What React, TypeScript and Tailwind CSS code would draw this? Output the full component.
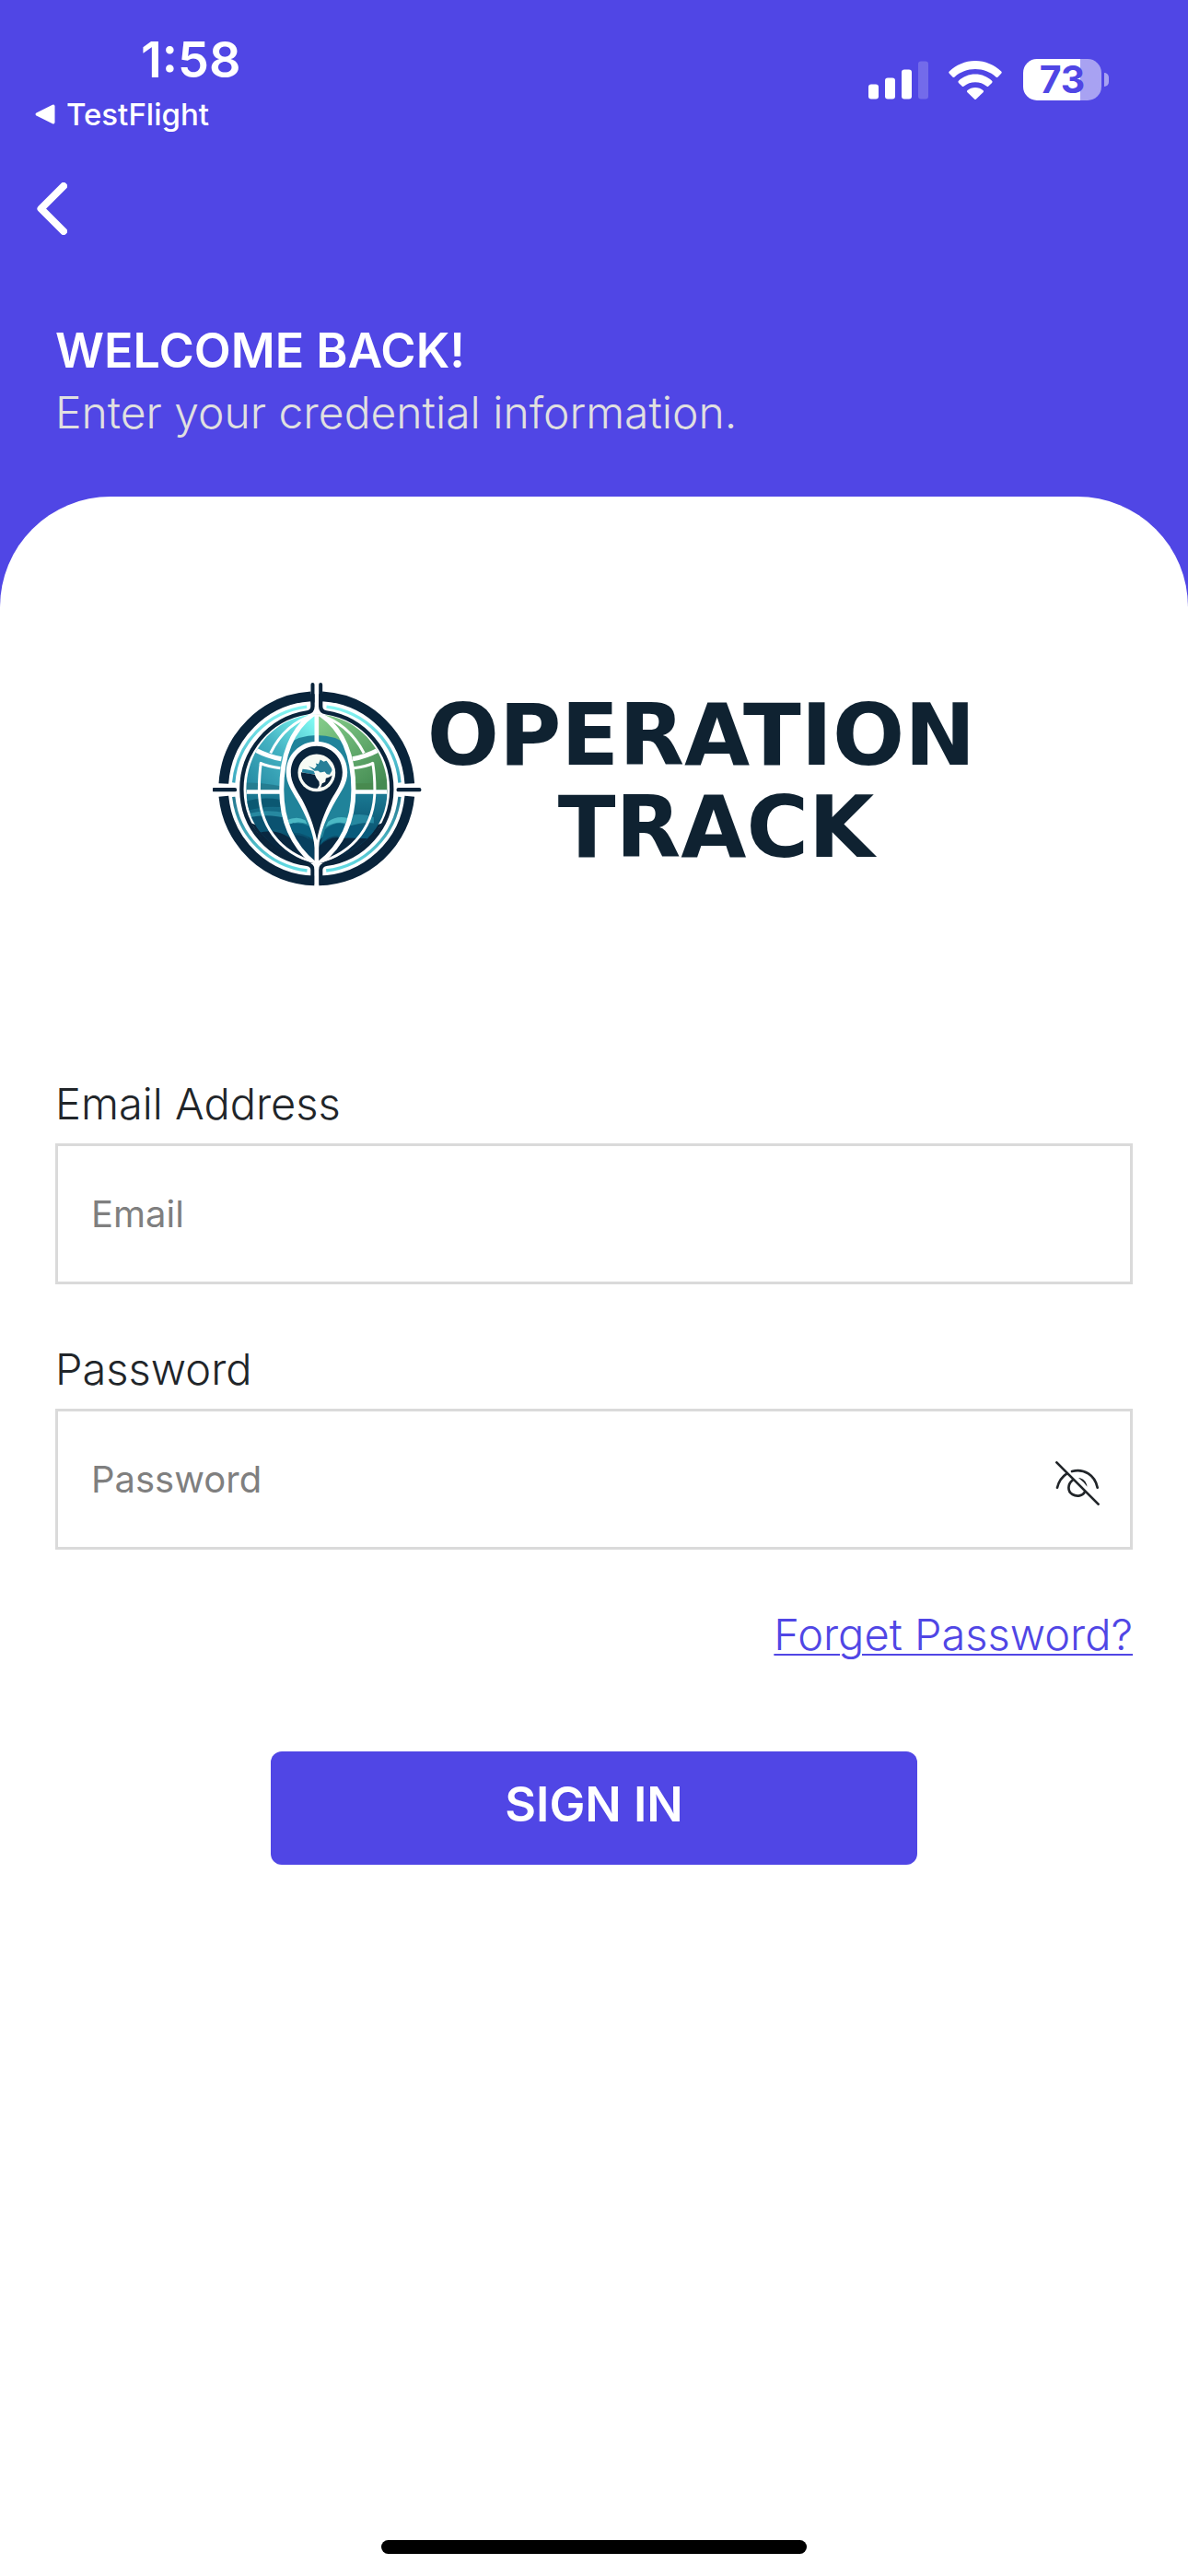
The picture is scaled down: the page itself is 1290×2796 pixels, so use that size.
import { useState } from 'react';

const StatusIcons = () => (
  <div className="flex items-center text-white">
    <svg className="w-[65px] h-[42px]" viewBox="0 0 65 42" fill="currentColor" aria-label="Cellular signal">
      <rect x="0" y="25.5" width="11" height="16" rx="3" />
      <rect x="18" y="18.5" width="11" height="23" rx="3" />
      <rect x="36" y="9.5" width="11" height="32" rx="3" />
      <rect x="54" y="0.5" width="11" height="41" rx="3" opacity="0.2" />
    </svg>
    <svg className="w-[58px] h-[42px] ml-[22px]" viewBox="0 0 58 42" fill="currentColor" aria-label="Wi-Fi">
      <path d="M29 0C40 0 50 4.500 57.200 11.500Q58.300 12.600 57.200 13.700L53.600 17.400Q52.500 18.500 51.400 17.400C45.400 11.900 37.600 8.900 29 8.900S12.600 11.900 6.600 17.400Q5.500 18.500 4.400 17.400L.8 13.700Q-.3 12.600 .8 11.500C8 4.500 18 0 29 0Z" />
      <path d="M29 14.500C36 14.500 42.300 17.200 47.100 21.700Q48.200 22.800 47.100 23.900L43.400 27.500Q42.300 28.600 41.200 27.600C37.900 24.700 33.600 23.200 29 23.200S20.100 24.700 16.800 27.600Q15.700 28.600 14.600 27.500L10.900 23.900Q9.800 22.800 10.900 21.700C15.700 17.200 22 14.500 29 14.500Z" />
      <path d="M29 29C32.200 29 35.100 30.100 37.400 32.100Q38.600 33.200 37.500 34.300L30 41.600Q29 42.500 28 41.600L20.500 34.300Q19.400 33.200 20.600 32.100C22.900 30.100 25.800 29 29 29Z" />
    </svg>
    <div className="flex items-center gap-[3px] ml-[23px]">
      <div className="flex items-center justify-center w-[85px] h-[45px] rounded-[15px] bg-linear-to-r from-white from-73% to-[#a8a2f2] to-73%">
        <span className="text-[41px] leading-[45px] font-bold text-[#5046e5]">73</span>
      </div>
      <span className="w-[5px] h-[15px] rounded-r-full bg-[#a8a2f2]" />
    </div>
  </div>
);

const GlobeLogo = () => (
  <svg className="w-[227px] h-[222px] shrink-0" viewBox="60 60 680 665" fill="none" aria-hidden="true">
    <defs>
      <clipPath id="globe">
        <path d="M398 166C525 168 628 275 628 411C628 545 530 620 398 652C266 620 169 545 169 411C169 275 271 168 398 166Z" />
      </clipPath>
      <clipPath id="earth">
        <circle cx="398" cy="356" r="51" />
      </clipPath>
      <linearGradient id="sky" x1="170" y1="400" x2="400" y2="180" gradientUnits="userSpaceOnUse">
        <stop stopColor="#2489a2" />
        <stop offset="0.5" stopColor="#45b3c3" />
        <stop offset="1" stopColor="#83fff6" />
      </linearGradient>
      <linearGradient id="land" x1="420" y1="180" x2="600" y2="400" gradientUnits="userSpaceOnUse">
        <stop stopColor="#82ca88" />
        <stop offset="1" stopColor="#448b52" />
      </linearGradient>
      <linearGradient id="sea" x1="398" y1="400" x2="398" y2="650" gradientUnits="userSpaceOnUse">
        <stop stopColor="#1d7f98" />
        <stop offset="0.6" stopColor="#0b5673" />
        <stop offset="0.85" stopColor="#082740" />
      </linearGradient>
      <linearGradient id="arcTop" x1="0" y1="140" x2="0" y2="390" gradientUnits="userSpaceOnUse">
        <stop stopColor="#86f7f4" />
        <stop offset="1" stopColor="#38a5bd" />
      </linearGradient>
      <linearGradient id="arcBottom" x1="0" y1="432" x2="0" y2="676" gradientUnits="userSpaceOnUse">
        <stop stopColor="#22758d" />
        <stop offset="1" stopColor="#65dfe6" />
      </linearGradient>
    </defs>

    {/* outer ring, broken at the four compass points */}
    <g stroke="#09243b">
      <path strokeWidth="32" d="M380 107.500A303 303 0 0 0 95.500 391M416 107.500A303 303 0 0 1 700.500 391M95.500 432A303 303 0 0 0 391 706.500M700.500 432A303 303 0 0 1 405 706.500" />
      <path strokeWidth="12" strokeLinecap="round" d="M385 69V125M411 69V125" />
      <path strokeWidth="13" d="M385 100V140Q385 157 367 160A252 252 0 0 0 154 411A246 246 0 0 0 367 653Q385 657 385 672V720M411 100V140Q411 157 429 160A252 252 0 0 1 642 411A246 246 0 0 1 429 653Q411 657 411 672V720" />
      <path strokeWidth="13" strokeLinecap="round" d="M64 411H132M664 411H732" />
      <path fill="#09243b" stroke="none" d="M186 520A246 246 0 0 0 367 652L391 646L300 560ZM610 520A246 246 0 0 1 429 652L405 646L496 560Z" />
    </g>
    <g strokeWidth="10">
      <path stroke="url(#arcTop)" d="M366 141A272 272 0 0 0 128 388M430 141A272 272 0 0 1 668 388" />
      <path stroke="url(#arcBottom)" d="M128 434A272 272 0 0 0 367 674M668 434A272 272 0 0 1 429 674" />
    </g>

    <g clipPath="url(#globe)">
      <path fill="url(#sky)" d="M160 160H398V420H160Z" />
      <path fill="url(#land)" d="M398 160H640V420H398Z" />
      <path fill="url(#sea)" d="M160 411H640V660H160Z" />
      <path fill="#257d91" d="M160 388Q220 388 285 400V420H160Z" />
      <path fill="#488a4f" d="M520 390H580V412H520Z" />
      <path fill="#0b5872" d="M170 448Q240 426 330 456L350 482Q250 450 160 484Z" />
      <path fill="#2688a0" d="M160 495Q250 460 360 508V532Q265 485 188 520Z" />
      <path fill="#0a5270" d="M180 500Q290 480 370 540V580Q290 520 206 552Z" />
      <path fill="#082740" d="M160 545L206 552Q280 530 335 590L398 620V660H160Z" />
      <path fill="#2688a0" d="M430 545Q500 470 584 500V520Q520 510 430 570Z" />
      <path fill="#095a7b" d="M460 545Q540 500 600 560L590 620H490Z" />
      <path fill="#082740" d="M398 620Q440 570 500 568Q560 570 590 570L640 520V660H398Z" />

      {/* darker band behind the pin */}
      <path fill="#20839a" d="M301 266Q340 234 398 234Q460 234 497 266Q530 410 498 505L398 580L305 505Q265 410 301 266Z" />
      <path fill="#4bb8c4" d="M299 510Q335 495 361 510L367 522Q335 510 307 524Z" />
      <path fill="#0a6281" d="M305 525Q340 512 375 530L388 574Q350 548 324 552Z" />
      <path fill="#07405f" d="M325 560Q358 552 390 590V640Q350 610 325 560Z" />
      <path fill="#4bb8c4" d="M435 515Q462 495 499 503L492 520Q462 512 428 532Z" />
      <path fill="#0a6281" d="M425 540Q462 510 493 525L480 560Q440 555 410 590Z" />
      <path fill="#082740" d="M407 595Q440 560 480 568Q456 612 407 645Z" />

      <g stroke="#fff">
        <path strokeWidth="15" d="M385 166Q284 240 284 411Q284 565 392 652M411 166Q518 240 518 411Q518 565 404 652" />
        <path strokeWidth="9" d="M398 166Q298 190 248 292M398 166Q498 190 552 292M580 322Q587 362 587 411C587 520 526 615 398 650M217 322Q211 362 211 411C211 520 270 615 398 650" />
        <path strokeWidth="15" d="M202 283Q238 302 283 311M596 283Q560 302 515 311" />
        <path strokeWidth="9" d="M213 324Q240 336 280 341M583 324Q560 336 518 341" />
        <path strokeWidth="14" d="M160 418H284M518 418H640M398 160V270" />
      </g>
    </g>

    {/* pin */}
    <path fill="#fff" d="M398 254C452 254 498 298 498 354C498 390 478 415 461 445C434 492 406 555 405 600V723H391V600C390 555 362 492 335 445C318 415 299 390 299 354C299 298 344 254 398 254Z" />
    <path fill="#09243b" d="M398 269C445 269 482 307 482 354C482 389 461 415 446 442C425 480 407 530 399 575C390 530 371 480 350 442C335 415 314 389 314 354C314 307 351 269 398 269Z" />
    <circle cx="398" cy="356" r="61" fill="#f7fbf5" />
    <g clipPath="url(#earth)">
      <path fill="#2685a0" d="M352 344L366 345L388 350L393 360L380 360L350 354Z" />
      <path fill="#09243b" d="M347 354L392 362L397 373L406 385L407 396L399 410H340Z" />
      <path fill="#277f98" d="M371 334L391 342L398 333L395 325L404 327L410 313L421 320L430 316L450 346L440 362L431 360L424 352L410 355L402 349L391 350Z" />
      <path fill="#09243b" d="M450 364L437 371L428 374L426 386L416 390L411 403L450 400Z" />
    </g>
  </svg>
);

const EyeOffIcon = () => (
  <svg className="w-12 h-12" viewBox="0 0 48 48" fill="none" stroke="#212529" strokeWidth="2.7" strokeLinecap="round" aria-hidden="true">
    <path d="M1.400 1.400L46.600 46.600" />
    <path d="M2 28.700C3.500 22.500 7 17 12.500 13.400" />
    <path d="M18 11C31 7.500 43 15 45.700 28.700" />
    <path d="M18.800 20.500C13 25 13 33 18.500 36C23.500 39 29.800 37.500 31.800 33.500" />
    <path d="M25 18C30 18.500 34 22 34.500 27.800Q31 22.500 25 18Z" fill="#212529" stroke="none" />
  </svg>
);

interface FieldProps {
  id: string;
  label: string;
  placeholder: string;
  type: string;
  children?: React.ReactNode;
}

const Field = ({ id, label, placeholder, type, children }: FieldProps) => (
  <div className="flex flex-col gap-[15px]">
    <label htmlFor={id} className="text-[47px] leading-[56px] font-light text-[#212529]">{label}</label>
    <div className="flex items-center h-[153px] border-3 border-[#dadada] pl-9 pr-[33px]">
      <input
        id={id}
        type={type}
        placeholder={placeholder}
        className="flex-1 min-w-0 h-full text-[40px] text-[#212529] placeholder:text-[#7f7f7f] outline-none"
      />
      {children}
    </div>
  </div>
);

export default function App() {
  const [showPassword, setShowPassword] = useState(false);

  return (
    <div className="min-h-screen flex flex-col bg-[#5046e5] font-['Inter','Liberation_Sans',sans-serif]">
      <header className="text-white">
        <div className="flex items-start justify-between pt-[35px] pl-[38px] pr-[86px]">
          <div className="flex flex-col gap-[9px]">
            <span className="pl-[115px] text-[54px] leading-[60px] font-semibold">1:58</span>
            <a href="#testflight" className="flex items-center gap-3 text-[33px] leading-10 font-medium">
              <svg className="w-[22px] h-[22px]" viewBox="0 0 22 22" fill="currentColor" aria-hidden="true">
                <path d="M1.500 9.500L19 .8Q21.500 0 21.500 2.500V19.500Q21.500 22 19 21.200L1.500 12.500Q-.5 11 1.500 9.500Z" />
              </svg>
              TestFlight
            </a>
          </div>
          <div className="pt-[29px]">
            <StatusIcons />
          </div>
        </div>
        <button type="button" aria-label="Back" className="block mt-[54px] ml-10">
          <svg className="w-[33px] h-[57px]" viewBox="0 0 33 57" fill="none" stroke="currentColor" strokeWidth="8" strokeLinecap="round" strokeLinejoin="round">
            <path d="M29 4L4.500 28.500L29 53" />
          </svg>
        </button>
        <div className="px-[60px] pt-[94px] pb-[59px]">
          <h1 className="text-[52px] leading-16 font-semibold">WELCOME BACK!</h1>
          <p className="mt-[3px] text-[48px] leading-16 font-light text-[#e0e0e0]">Enter your credential information.</p>
        </div>
      </header>

      <main className="flex-1 flex flex-col bg-white rounded-t-[120px] px-[60px] pt-[201px] pb-6">
        <div className="flex items-center justify-center gap-[6px]">
          <GlobeLogo />
          <div className="pb-1 text-center text-[92px] leading-[100px] font-bold text-[#0f2231] font-['DejaVu_Sans',sans-serif]">
            <p>OPERATION</p>
            <p className="pl-8">TRACK</p>
          </div>
        </div>

        <form className="mt-[208px] flex flex-col" onSubmit={(e) => e.preventDefault()}>
          <div className="flex flex-col gap-16">
            <Field id="email" label="Email Address" placeholder="Email" type="email" />
            <Field id="password" label="Password" placeholder="Password" type={showPassword ? 'text' : 'password'}>
              <button type="button" className="pt-2" aria-label="Toggle password visibility" onClick={() => setShowPassword(!showPassword)}>
                <EyeOffIcon />
              </button>
            </Field>
          </div>
          <a href="#forgot" className="self-end mt-16 text-[47px] leading-[56px] font-light text-[#5046e5] underline decoration-2 underline-offset-4">
            Forget Password?
          </a>
          <button type="submit" className="self-center w-3/5 h-[123px] mt-[99px] pb-2 rounded-xl bg-[#5046e5] text-white text-[52px] leading-16 font-semibold">
            SIGN IN
          </button>
        </form>

        <div className="self-center mt-auto w-[462px] h-[15px] rounded-full bg-black" />
      </main>
    </div>
  );
}
